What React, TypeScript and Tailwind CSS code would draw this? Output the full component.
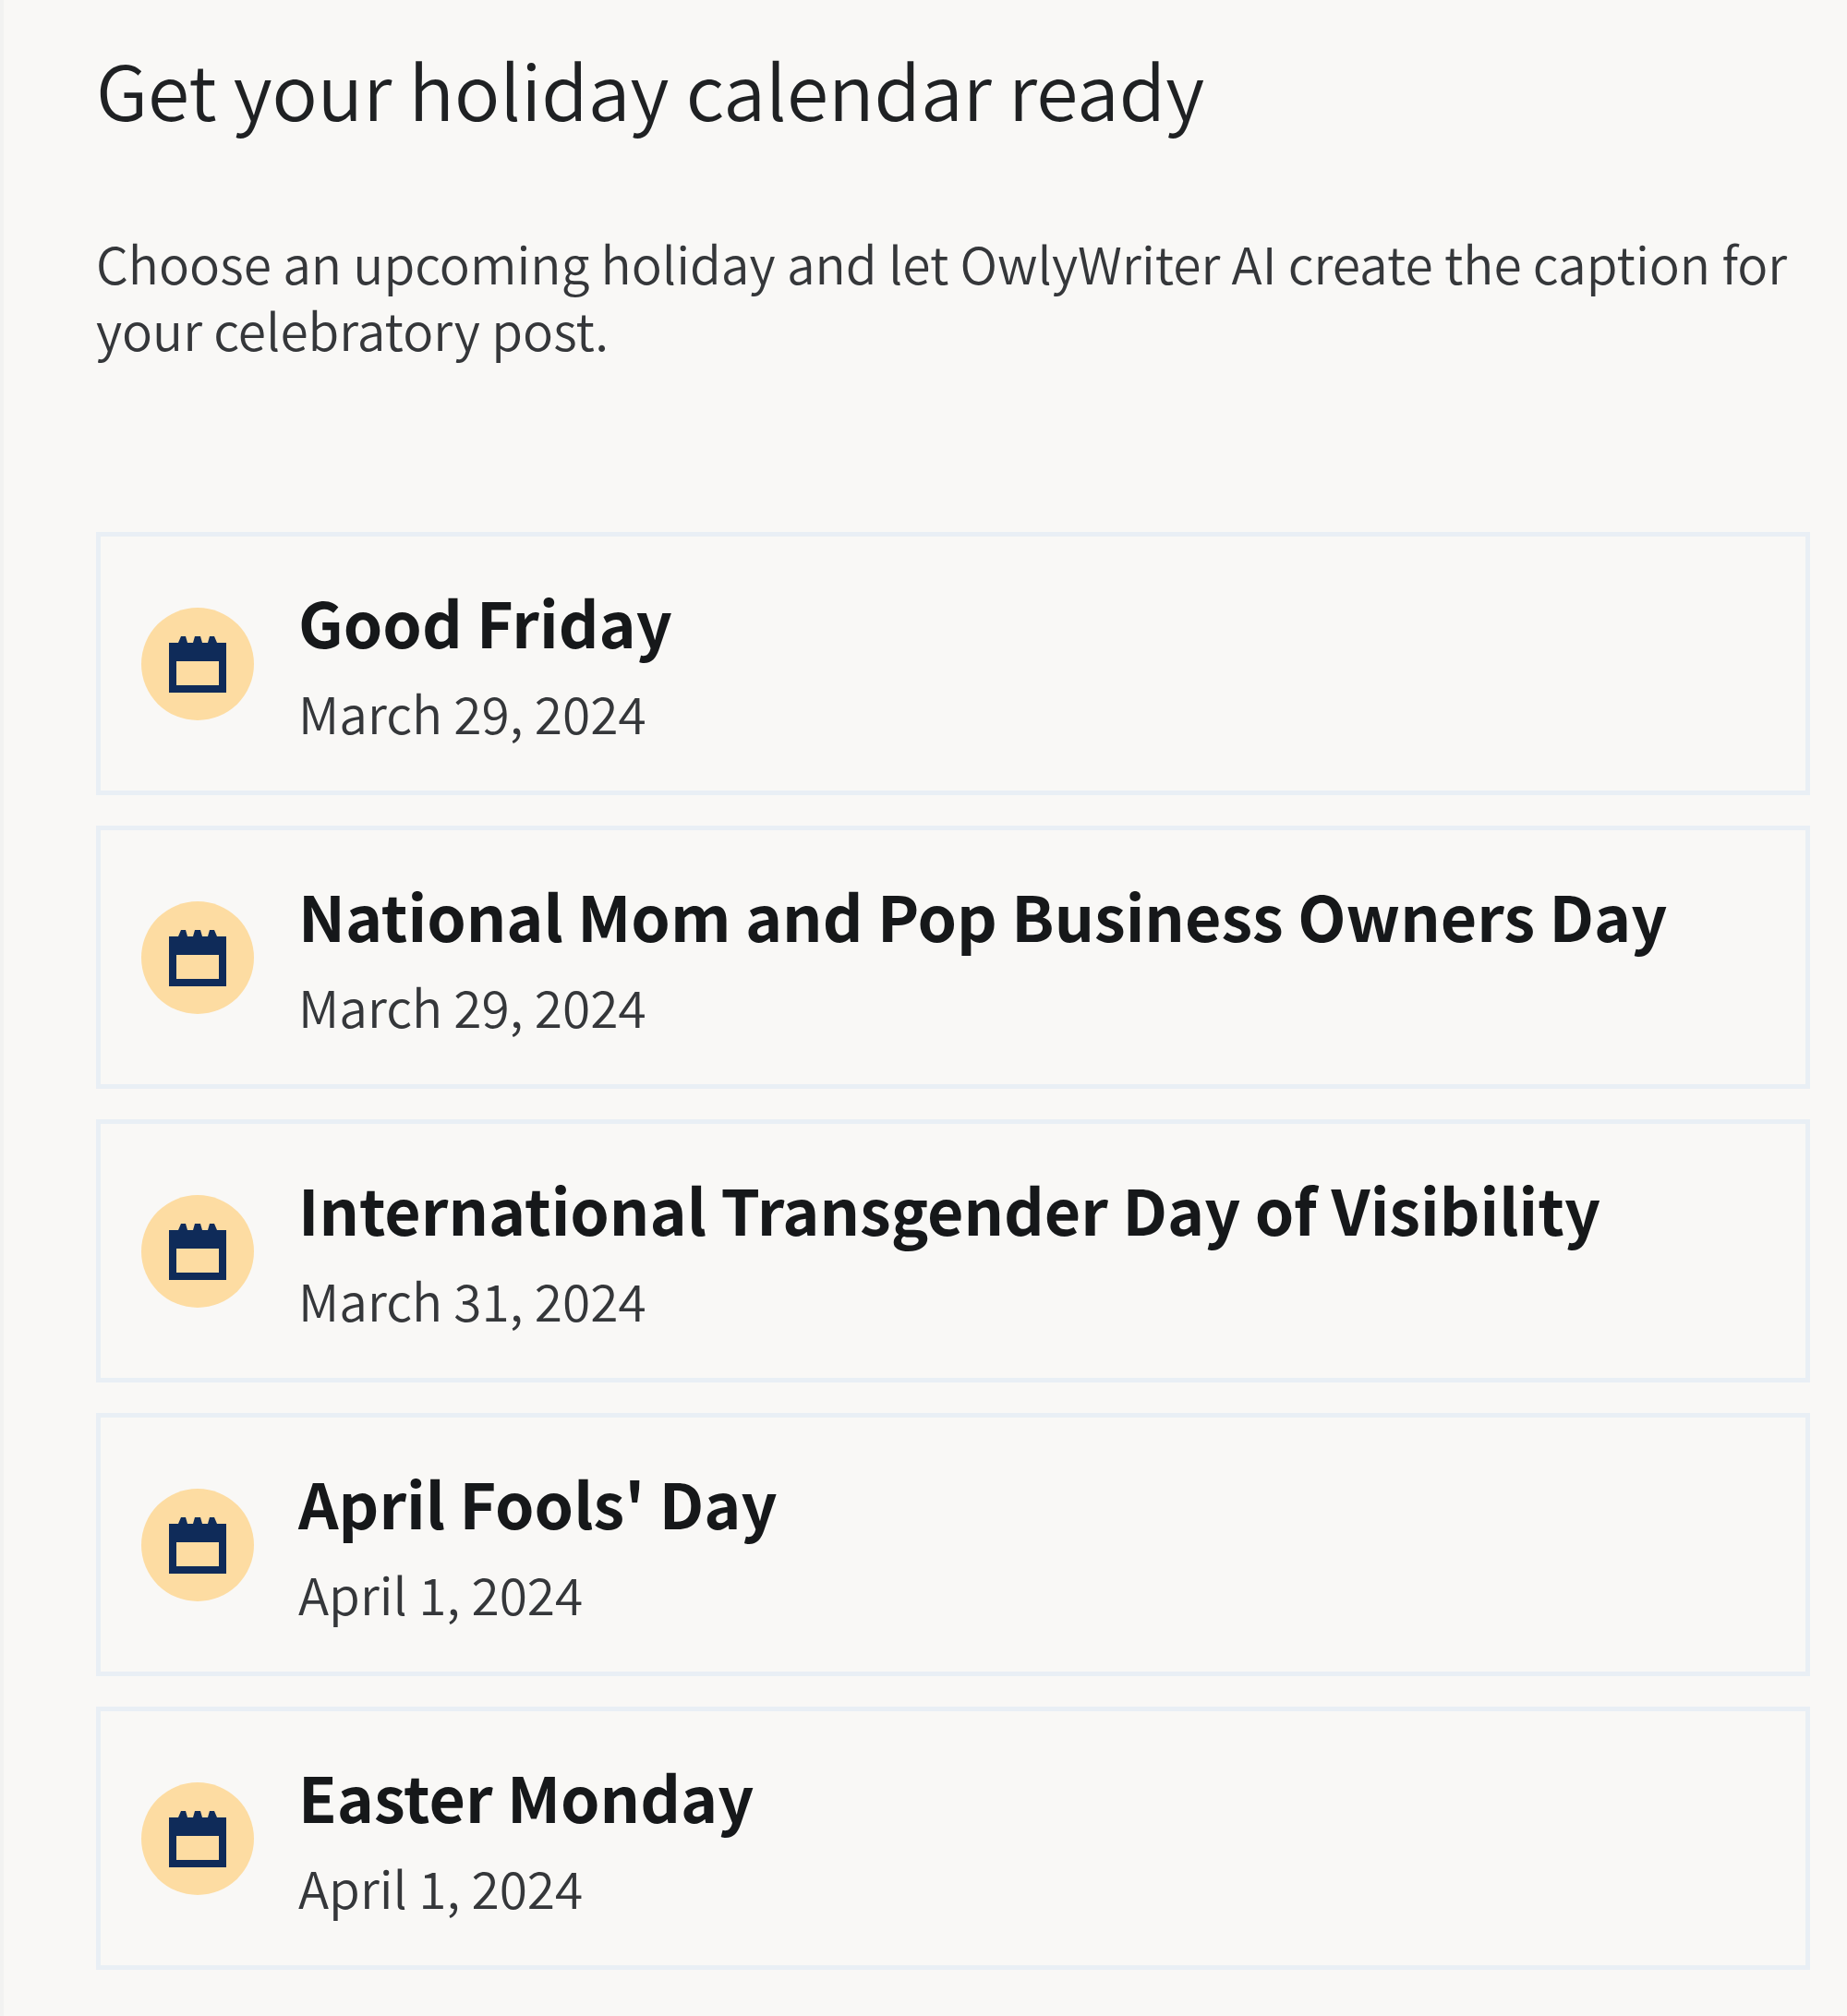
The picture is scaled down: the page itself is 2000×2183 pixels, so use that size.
const holidays = [
  { name: "Good Friday", date: "March 29, 2024" },
  { name: "National Mom and Pop Business Owners Day", date: "March 29, 2024" },
  { name: "International Transgender Day of Visibility", date: "March 31, 2024" },
  { name: "April Fools' Day", date: "April 1, 2024" },
  { name: "Easter Monday", date: "April 1, 2024" },
];

function CalendarIcon() {
  return (
    <svg viewBox="0 0 62 62" className="size-[62px] fill-[#0f2b59]" aria-hidden="true">
      <path
        fillRule="evenodd"
        d="M0 8H10L13 1H18L20 8H26L28 1H34L36 8H42L44 1H49L52 8H62V62H0ZM8 28V54H54V28Z"
      />
    </svg>
  );
}

export default function App() {
  return (
    <main className="min-h-screen border-l-4 border-[#f2f2f1] bg-[#f9f8f6] pt-12 pr-10 pb-12 pl-[100px] font-['Noto_Sans_CJK_SC',sans-serif]">
      <h1 className="text-[82px] leading-[96px] font-[350] text-[#1f2123]">Get your holiday calendar ready</h1>
      <p className="mt-[104px] text-[55px] leading-[72px] font-[350] text-[#35373a]">
        Choose an upcoming holiday and let OwlyWriter AI create the caption for your celebratory post.
      </p>
      <ul className="mt-[184px] flex flex-col gap-[33px]">
        {holidays.map((h) => (
          <li key={h.name}>
            <button
              type="button"
              className="flex h-[285px] w-full items-center gap-12 border-[5px] border-[#e9eff5] px-11 text-left"
            >
              <span className="flex size-[122px] shrink-0 items-center justify-center rounded-full bg-[#fddca2]">
                <CalendarIcon />
              </span>
              <span className="flex flex-col pt-1">
                <span className="text-[68px] leading-[100px] font-bold text-[#16181a]">{h.name}</span>
                <span className="text-[55px] leading-[96px] font-[350] text-[#35373a]">{h.date}</span>
              </span>
            </button>
          </li>
        ))}
      </ul>
    </main>
  );
}
